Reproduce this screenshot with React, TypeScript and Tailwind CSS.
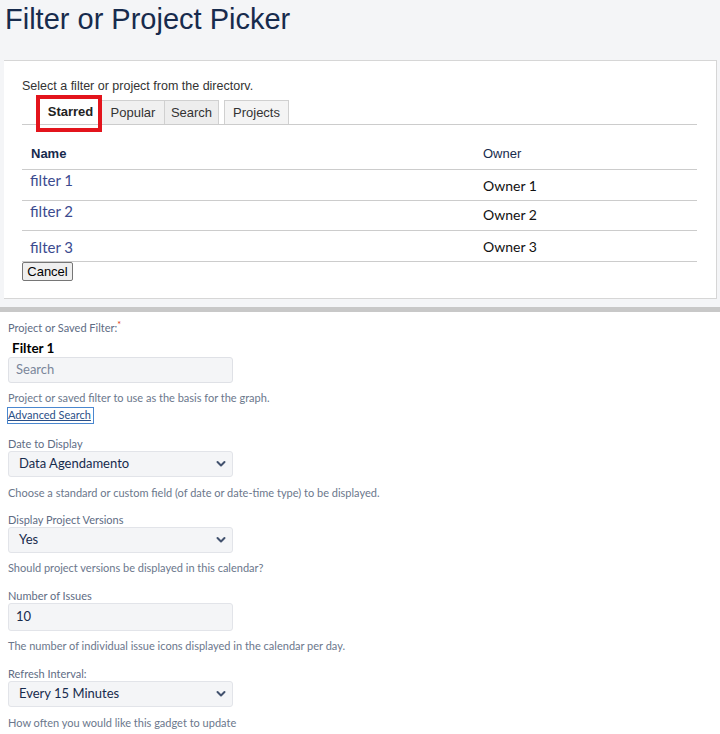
import React from "react";

const arial = { fontFamily: '"Liberation Sans", Arial, sans-serif' };

function Chevron() {
  return (
    <svg width="10" height="7" viewBox="0 0 10 7" className="absolute right-[6px] top-1/2 -translate-y-1/2">
      <polyline points="1.5,1.5 5,5 8.5,1.5" fill="none" stroke="#42526e" strokeWidth="2" strokeLinecap="round" strokeLinejoin="round" />
    </svg>
  );
}

function Select({ value }: { value: string }) {
  return (
    <div className="relative w-[225px] h-[26px] bg-[#f4f5f7] border border-[#e2e4e9] rounded-[3px] pl-[10px] flex items-center text-[13px] text-[#172b4d]">
      {value}
      <Chevron />
    </div>
  );
}

function Label({ children, className = "" }: { children: React.ReactNode; className?: string }) {
  return <div className={`text-[11px] leading-[15px] text-[#5e6c84] ${className}`}>{children}</div>;
}

function Help({ children, className = "" }: { children: React.ReactNode; className?: string }) {
  return <div className={`text-[11px] leading-[15px] text-[#6b778c] ${className}`}>{children}</div>;
}

export default function App() {
  const rows = [
    { name: "filter 1", owner: "Owner 1", h: "h-[31px]", np: "pt-[1px]", op: "pt-[7px]" },
    { name: "filter 2", owner: "Owner 2", h: "h-[30px]", np: "pt-[1px]", op: "pt-[5px]" },
    { name: "filter 3", owner: "Owner 3", h: "h-[31px]", np: "pt-[7px]", op: "pt-[7px]" },
  ];
  return (
    <div className="w-[720px] min-h-[734px] bg-white">
      <div className="bg-[#f4f5f7]">
        <div className="h-[60px] pl-[5px] text-[29px] leading-[39px] text-[#172b4d]" style={arial}>
          Filter or Project Picker
        </div>
        <div className="ml-[4px] w-[713px] bg-white border-t border-r border-b border-[#d6d6d6] pl-[18px] pr-[19px] pt-[18px] pb-[17px]" style={arial}>
          <div className="text-[12.5px] leading-[14px] text-[#333]">Select a filter or project from the directorv.</div>
          <div className="mt-[7px] flex border-b border-[#ccc] pl-[18px] text-[13px] text-[#333]">
            <div className="relative w-[61px] h-[24px] bg-white flex items-center justify-center font-bold text-[#222]">
              Starred
              <div className="absolute left-[-4px] top-[-5px] w-[66px] h-[37px] border-[4px] border-[#e3141c]" />
            </div>
            <div className="w-[64px] h-[24px] bg-[#f0f0f0] border border-b-0 border-[#d0d0d0] flex items-center justify-center">Popular</div>
            <div className="w-[54px] h-[24px] bg-[#ededed] border border-l-0 border-b-0 border-[#d0d0d0] flex items-center justify-center">Search</div>
            <div className="ml-[5px] w-[65px] h-[24px] bg-[#f4f4f4] border border-b-0 border-[#d0d0d0] flex items-center justify-center">Projects</div>
          </div>
          <div className="flex h-[45px] border-b border-[#ccc] text-[13px] leading-[15px] text-[#172b4d]">
            <div className="w-[461px] pl-[9px] pt-[21px] font-bold">Name</div>
            <div className="pt-[21px]">Owner</div>
          </div>
          {rows.map((r) => (
            <div key={r.name} className={`flex ${r.h} border-b border-[#ccc] leading-[18px]`} style={{ fontFamily: '"Lato", "Open Sans", sans-serif' }}>
              <div className={`w-[461px] pl-[8px] ${r.np} text-[15px] text-[#3b4a8f]`}>{r.name}</div>
              <div className={`${r.op} text-[14px] text-[#111]`}>{r.owner}</div>
            </div>
          ))}
          <button className="block w-[51px] h-[19px] bg-[#efefef] border border-[#767676] rounded-[2px] text-[13px] leading-[15px] text-black" style={arial}>
            Cancel
          </button>
        </div>
        <div className="h-[8px]" />
      </div>
      <div className="h-[5px] bg-[#c8c8c8]" />
      <div className="pl-[8px] pt-[8px] pb-[10px]" style={{ fontFamily: '"Lato", "Noto Sans", sans-serif' }}>
        <Label>
          Project or Saved Filter:<span className="text-[#de350b] align-top text-[9px] leading-[9px]">*</span>
        </Label>
        <div className="mt-[5px] pl-[4px] text-[13.5px] leading-[16px] font-bold text-black">Filter 1</div>
        <div className="mt-[1px] w-[225px] h-[26px] bg-[#f4f5f7] border border-[#dfe1e6] rounded-[3px] pl-[7px] flex items-center text-[13px] text-[#7a869a]">
          Search
        </div>
        <Help className="mt-[7px]">Project or saved filter to use as the basis for the graph.</Help>
        <div className="mt-[2px] -ml-[1px] w-fit h-[17px] pr-[2px] border-[1.5px] border-[#4a87cf] text-[11px] leading-[14px] text-[#2a4f87] underline">
          Advanced Search
        </div>
        <Label className="mt-[12px]">Date to Display</Label>
        <Select value="Data Agendamento" />
        <Help className="mt-[8px]">Choose a standard or custom field (of date or date-time type) to be displayed.</Help>
        <Label className="mt-[12px]">Display Project Versions</Label>
        <Select value="Yes" />
        <Help className="mt-[7px]">Should project versions be displayed in this calendar?</Help>
        <Label className="mt-[13px]">Number of Issues</Label>
        <div className="w-[225px] h-[28px] bg-[#f4f5f7] border border-[#e2e4e9] rounded-[3px] pl-[7px] flex items-center text-[13px] text-[#172b4d]">
          10
        </div>
        <Help className="mt-[7px]">The number of individual issue icons displayed in the calendar per day.</Help>
        <Label className="mt-[13px]">Refresh Interval:</Label>
        <Select value="Every 15 Minutes" />
        <Help className="mt-[8px]">How often you would like this gadget to update</Help>
      </div>
    </div>
  );
}
